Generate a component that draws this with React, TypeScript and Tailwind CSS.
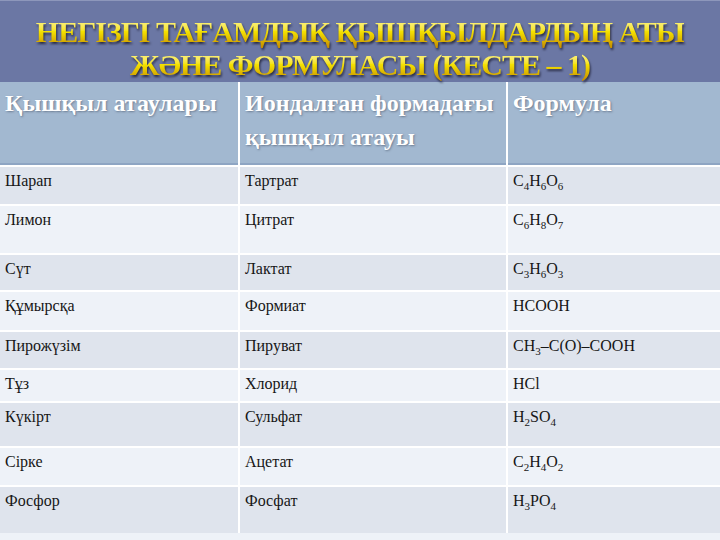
type Row = { name: string; ion: string; formula: string; h: string; dark: boolean }

const rows: Row[] = [
  { name: 'Шарап', ion: 'Тартрат', formula: 'C4H6O6', h: 'h-[37px]', dark: true },
  { name: 'Лимон', ion: 'Цитрат', formula: 'C6H8O7', h: 'h-[47px]', dark: false },
  { name: 'Сүт', ion: 'Лактат', formula: 'C3H6O3', h: 'h-[35px]', dark: true },
  { name: 'Құмырсқа', ion: 'Формиат', formula: 'HCOOH', h: 'h-[38px]', dark: false },
  { name: 'Пирожүзім', ion: 'Пируват', formula: 'CH3–C(O)–COOH', h: 'h-[36px]', dark: true },
  { name: 'Тұз', ion: 'Хлорид', formula: 'HCl', h: 'h-[31px]', dark: false },
  { name: 'Күкірт', ion: 'Сульфат', formula: 'H2SO4', h: 'h-[43px]', dark: true },
  { name: 'Сірке', ion: 'Ацетат', formula: 'C2H4O2', h: 'h-[37px]', dark: false },
  { name: 'Фосфор', ion: 'Фосфат', formula: 'H3PO4', h: 'h-[46px]', dark: true },
]

// every digit in a formula is a subscript
function Formula({ text }: { text: string }) {
  return (
    <>
      {text.split(/(\d)/).map((part, i) =>
        /\d/.test(part) ? (
          <span key={i} className="relative top-[4px] text-[11px] leading-none">
            {part}
          </span>
        ) : (
          <span key={i}>{part}</span>
        )
      )}
    </>
  )
}

const titleText =
  'text-[30px] font-bold leading-[33px] tracking-[-1px] bg-gradient-to-b from-[#fff9a0] via-[#f5e200] to-[#c38a00] bg-clip-text text-transparent drop-shadow-[1px_2px_1px_rgba(25,25,45,0.8)]'

const headCell =
  'h-[83px] bg-[#a2b8d0] border-b-2 border-[#8ea5c3] pl-[5px] pt-[4px] text-[24px] font-bold leading-[34px] text-white [text-shadow:1px_1px_2px_rgba(60,70,90,0.5)]'

const bodyCell = 'pl-[5px] pt-[4px] text-[16px] leading-[20px] text-[#161616]'

export default function App() {
  return (
    <div className="w-[720px] h-[540px] overflow-hidden bg-[#eef2f8] font-['Liberation_Serif',serif]">
      {/* Title bar */}
      <div className="h-[82px] bg-[#6b77a4] border-t border-[#8d97bb] flex flex-col items-center pt-[14px]">
        <div className={titleText}>НЕГІЗГІ ТАҒАМДЫҚ ҚЫШҚЫЛДАРДЫҢ АТЫ</div>
        <div className={titleText}>ЖӘНЕ ФОРМУЛАСЫ (КЕСТЕ – 1)</div>
      </div>

      {/* Table */}
      <div className="grid grid-cols-[238px_266px_212px] gap-[2px] bg-white">
        <div className={headCell}>Қышқыл атаулары</div>
        <div className={headCell}>
          Иондалған формадағы
          <br />
          қышқыл атауы
        </div>
        <div className={headCell}>Формула</div>

        {rows.map((r) => {
          const bg = r.dark ? 'bg-[#dfe4ed]' : 'bg-[#eef2f8]'
          return (
            <div key={r.name} className="contents">
              <div className={`${r.h} ${bg} ${bodyCell}`}>{r.name}</div>
              <div className={`${r.h} ${bg} ${bodyCell}`}>{r.ion}</div>
              <div className={`${r.h} ${bg} ${bodyCell}`}>
                <Formula text={r.formula} />
              </div>
            </div>
          )
        })}
      </div>
    </div>
  )
}
